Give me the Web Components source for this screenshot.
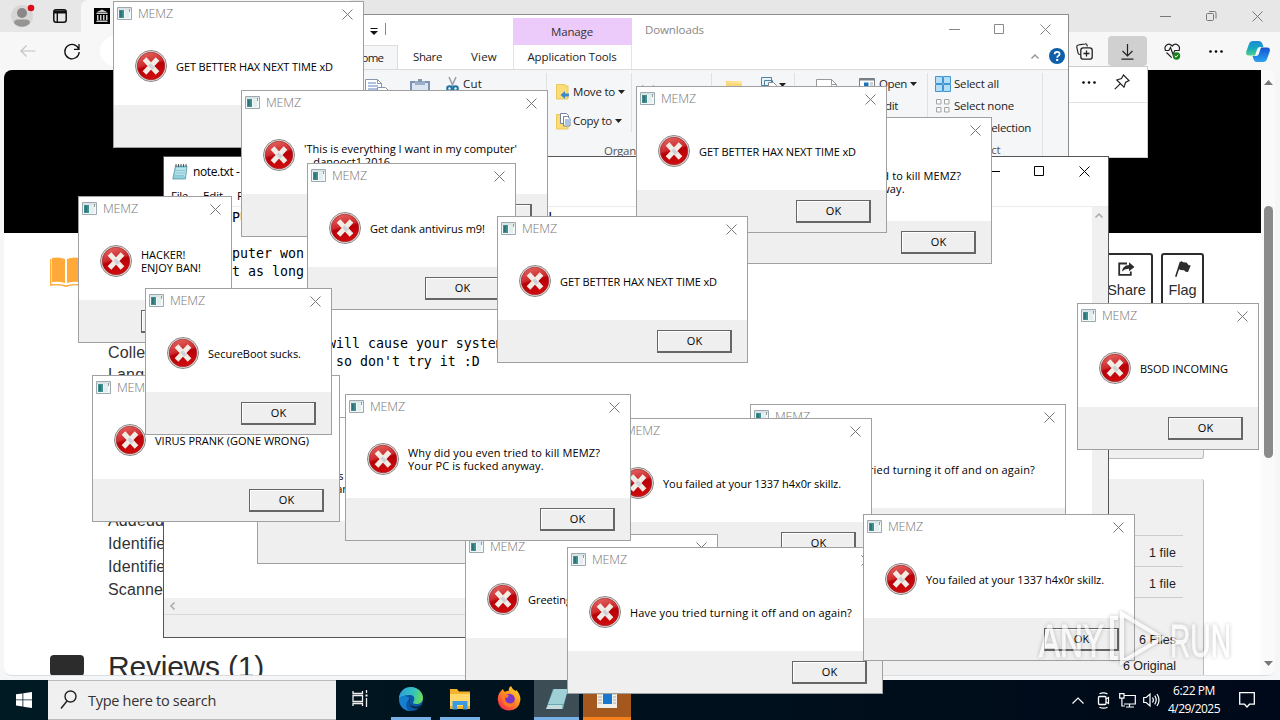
<!DOCTYPE html>
<html lang="en">
<head>
<meta charset="utf-8">
<title>Desktop</title>
<style>
  html, body {
    margin: 0;
    width: 1280px;
    height: 720px;
    overflow: hidden;
  }

  body {
    font-family: "Open Sans", "Noto Sans", sans-serif;
    font-size: 12px;
    color: #111;
  }
</style>
</head>
<body>
<desk-top></desk-top>

<script>
const define = (name, html, setup) => {
  const template = document.createElement('template');
  template.innerHTML = html;

  customElements.define(name, class extends HTMLElement {
    connectedCallback() {
      if (!this.shadowRoot) {
        this.attachShadow({ mode: 'open' });
        this.shadowRoot.appendChild(template.content.cloneNode(true));
        if (setup) {
          setup(this, this.shadowRoot);
        }
      }
    }
  });
};

// Text that is letter-spaced to fill a given width
define('fit-text', `
  <style>
    :host { display: inline-block; flex: none; white-space: nowrap; }
    span { display: block; width: max-content; white-space: pre; }
  </style>
  <span><slot></slot></span>
`, (host, root) => {
  const span = root.querySelector('span');
  const chars = Math.max(...host.textContent.split('\n').map((line) => line.length));
  const target = Number(host.getAttribute('width'));
  const natural = span.getBoundingClientRect().width;
  span.style.letterSpacing = `${(target - natural) / chars}px`;
  host.style.width = `${target}px`;
});

const icons = {
  close: ['0 0 11 11', '<path d="M.5.5l10 10M10.5.5l-10 10" fill="none" stroke="currentColor"/>'],
  max: ['0 0 11 11', '<path d="M.5.5h9v9h-9z" fill="none" stroke="currentColor"/>'],
  min: ['0 0 11 11', '<path d="M0 5.5h11" fill="none" stroke="currentColor"/>'],
  restore: ['0 0 11 11', '<path d="M.5 3.5q0-1 1-1h5q1 0 1 1v5q0 1-1 1h-5q-1 0-1-1zM3 .5h5.500q1.500 0 1.500 1.500v5.500" fill="none" stroke="currentColor"/>'],
  caret: ['0 0 7 4', '<path d="M0 0h7l-3.500 4z" fill="currentColor"/>'],
  up: ['0 0 8 5', '<path d="M.5 4.500L4 1l3.500 3.500" fill="none" stroke="currentColor" stroke-width="1.500"/>'],
  left: ['0 0 5 8', '<path d="M4.500.5L1 4l3.500 3.500" fill="none" stroke="currentColor" stroke-width="1.500"/>'],
  app: ['0 0 15 13', '<path d="M.5.5h14v12H.5z" fill="#f5f8f8" stroke="#9caaaf"/><path d="M1 1h13v2H1z" fill="#dbe3e6"/><path d="M2 3h5v8H2z" fill="#3f8f8c"/><path d="M3 4h2v6H3z" fill="#2f7380"/><path d="M8 3h4v8H8z" fill="#e2efef"/><path d="M12 2h1v3h-1z" fill="#999"/>'],
  error: ['0 0 32 32', '<defs><linearGradient id="r" x1=".1" y1="0" x2=".4" y2="1"><stop offset="0" stop-color="#e56a64"/><stop offset=".48" stop-color="#cf2a2e"/><stop offset=".56" stop-color="#b80008"/><stop offset="1" stop-color="#cf0c0e"/></linearGradient></defs><circle cx="16" cy="16" r="15.500" fill="#ebe7e6" stroke="#8d8585"/><circle cx="16" cy="16" r="13.800" fill="url(#r)" stroke="#9c2427" stroke-width=".7"/><path d="M9.500 9l13 14M22.500 9l-13 14" stroke="#f1ece4" stroke-width="5" fill="none"/><path d="M14.500 14.500l4 4.200" stroke="#cfd3d8" stroke-width="3.500"/>'],
  note: ['0 0 16 17', '<path d="M3.500 3h11.500l-1.500 13H.8z" fill="#8fd0dc" stroke="#5796a5" stroke-width=".8"/><path d="M4 5h10l-1 8H3z" fill="#b4e4ec"/><path d="M4 7.500h9M4 10h9M3 12.500h9" stroke="#6fb0c0" stroke-width=".6"/><path d="M4 1v3M6.500 1v3M9 1v3M11.500 1v3M14 1v3" stroke="#555"/>'],
  pages: ['0 0 26 24', '<path d="M.5.5h12l4 4v18H.5z" fill="#fff" stroke="#8796ad"/><path d="M3 4h8M3 7h10M3 10h10M3 13h10" stroke="#5b86c0"/><path d="M12.500 8.500h8l4 4v11h-12z" fill="#fff" stroke="#8796ad"/><path d="M12.500.5v4h4" fill="none" stroke="#8796ad"/>'],
  clip: ['0 0 20 24', '<path d="M1 3h18v20H1z" fill="#dce6f2" stroke="#7b93b5" stroke-width="2"/><path d="M5 2h10v4H5z" fill="#9dafc6"/><path d="M8 0h4v3H8z" fill="#8497ae"/>'],
  cut: ['0 0 13 17', '<path d="M3 1l5 11M10 1L5 12" stroke="#9aa3ad" stroke-width="1.600" fill="none"/><circle cx="3.500" cy="12.500" r="2.300" fill="none" stroke="#1673a5" stroke-width="2"/><circle cx="9.500" cy="12.500" r="2.300" fill="none" stroke="#1673a5" stroke-width="2"/>'],
  move: ['0 0 14 16', '<path d="M.5.5H9V2h3v13H.5z" fill="#fbdc78" stroke="#ecc85b"/><path d="M13 9.500H9V7l-4.500 4L9 15v-2.500h4z" fill="#3c8ac8"/>'],
  copy: ['0 0 15 17', '<path d="M.5 1.500H10V3h2v13H.5z" fill="#fbdc78" stroke="#ecc85b"/><path d="M4.500.5h6l2 2v8h-8z" fill="#fff" stroke="#73819c"/><path d="M7.500 3.500h4l2.500 2v7.500H7.500z" fill="#fff" stroke="#73819c"/><path d="M9 7h4M9 9h4M9 11h4" stroke="#518bc7"/>'],
  folder: ['0 0 16 14', '<path d="M0 0h16v14H0z" fill="#f8d775"/><path d="M0 2l6-2h10v3z" fill="#ffe49a"/>'],
  newItem: ['0 0 17 16', '<path d="M.5.5h10v8H.5zM3.500 3.500h8v7h-8z" fill="#e8f2f8" stroke="#4f83a3"/><path d="M7.500 5.500h5l3 3v7h-8z" fill="#fff" stroke="#888"/>'],
  props: ['0 0 21 20', '<path d="M.5.5h15l5 5v14H.5z" fill="#fff" stroke="#999"/><path d="M15.500.5v5h5" fill="none" stroke="#999"/><path d="M5 12l3 4 8-9" stroke="#d34" stroke-width="2" fill="none"/>'],
  open: ['0 0 16 13', '<path d="M.5.5h15v12H.5z" fill="#fff" stroke="#777f88"/><path d="M1 1h14v1.500H1z" fill="#777f88"/><path d="M5 4.500h4.500v6H5z" fill="#1b72be"/><path d="M11 5h3M11 7h3M11 9h3" stroke="#9aa"/>'],
  selAll: ['0 0 16 16', '<path d="M.5.5h7v7h-7zM8.500.5h7v7h-7zM.5 8.500h7v7h-7zM8.500 8.500h7v7h-7z" fill="#b5ddf8" stroke="#3e96d8"/>'],
  selNone: ['0 0 14 14', '<path d="M.5.5h4.500v4.500H.5zM8.500.5h4.500v4.500H8.500zM.5 8.500h4.500v4.500H.5zM8.500 8.500h4.500v4.500H8.500z" fill="#fafafa" stroke="#a5a5a5"/>'],
  help: ['0 0 16 16', '<circle cx="8" cy="8" r="8" fill="#0f5ea8"/><path d="M5.600 6.200q0-2.400 2.500-2.400t2.500 2.100q0 1.200-1.300 2-1.100.7-1.100 1.800" fill="none" stroke="#fff" stroke-width="1.700"/><path d="M7.200 11h2v2h-2z" fill="#fff"/>'],
  person: ['0 0 24 24', '<circle cx="11" cy="12" r="11" fill="#d8d6d4"/><circle cx="11" cy="9" r="5" fill="#8a8886"/><path d="M3 19q0-3.500 4-3.500h8q4 0 4 3.500-3 3.800-8 3.800T3 19z" fill="#979593"/><circle cx="20" cy="4" r="3.300" fill="#d90c1c"/>'],
  tabs: ['0 0 14 14', '<rect x=".8" y=".8" width="12.400" height="12.400" rx="2.200" fill="none" stroke="#111" stroke-width="1.500"/><path d="M1 1.500h12v3H5V13H3.600V4.500H1z" fill="#111"/>'],
  museum: ['0 0 16 16', '<path d="M0 0h16v16H0z"/><path d="M8 1.500l6 3H2zM2.500 5h11v1h-11zM3 7h1.500v5H3zm3 0h1.500v5H6zm3 0h1.500v5H9zm3 0h1.500v5H12zM2.500 12.500h11v1.500h-11z" fill="#ccc"/>'],
  back: ['0 0 16 12', '<path d="M15.500 6H1M6.500.5L1 6l5.500 5.500" fill="none" stroke="#c2c2c2" stroke-width="1.200"/>'],
  reload: ['0 0 16 17', '<path d="M14.800 6.200A7.200 7.200 0 1 0 15.200 9M15 1v5.300h-5" fill="none" stroke="#111" stroke-width="1.300"/>'],
  collections: ['0 0 17 17', '<path d="M4.500 11.500H3.800q-1.500 0-1.800-1.500L.8 4Q.5 2.300 2.200 2l7-1.200q1.500-.3 1.800 1.200l.3 1.500" fill="none" stroke="#222" stroke-width="1.200"/><rect x="4.800" y="4.800" width="11.400" height="11.400" rx="2.500" fill="#f7f7f7" stroke="#222" stroke-width="1.300"/><path d="M10.500 7.500v6M7.500 10.500h6" stroke="#222" stroke-width="1.300"/>'],
  down: ['0 0 13 17', '<path d="M6.500 1v11.500M1.500 8l5 5 5-5M.5 16.200h12" fill="none" stroke="#222" stroke-width="1.200"/>'],
  heart: ['0 0 17 17', '<path d="M1.500 7.500C-.5 3 4.500-1 8.200 3c3.700-4 8.800 0 6.800 4.500M2.500 9.500l5.200 5.200M.8 7.500h4L6.500 4.500l2.500 7L10.800 7.500h5" fill="none" stroke="#222" stroke-width="1.200"/><circle cx="12.500" cy="13" r="3.700" fill="#16821b"/><path d="M10.800 13l1.200 1.200 2.200-2.400" fill="none" stroke="#fff"/>'],
  dots: ['0 0 14 3', '<circle cx="1.500" cy="1.500" r="1.300"/><circle cx="7" cy="1.500" r="1.300"/><circle cx="12.500" cy="1.500" r="1.300"/>'],
  pin: ['0 0 16 16', '<path d="M9.500 1l5.500 5.500-3.500 2-1.500 4.700L2.800 6l4.700-1.500zM6.200 9.800L.8 15.200" fill="none" stroke="#222" stroke-width="1.200"/>'],
  copilot: ['0 0 24 23', '<defs><linearGradient id="a" x1="0" y1="0" x2="0" y2="1"><stop offset="0" stop-color="#2188d9"/><stop offset=".5" stop-color="#16a8c0"/><stop offset="1" stop-color="#4fd08a"/></linearGradient><linearGradient id="b" x1="0" y1="0" x2="0" y2="1"><stop offset="0" stop-color="#1553d0"/><stop offset="1" stop-color="#2aa3f2"/></linearGradient></defs><path d="M7 1h6q2.500 0 3.300 2.500L17.500 7H14q-2 0-2.800 2L9 15.500H3Q-.8 15.500.3 11.500L3 4q1-3 4-3z" fill="url(#a)"/><path d="M17 22h-6q-2.500 0-3.300-2.500L6.500 16H10q2 0 2.800-2L15 7.500h6q3.800 0 2.700 4L21 19q-1 3-4 3z" fill="url(#b)"/>'],
  book: ['0 0 32 30', '<path d="M2 1v24q7-1 13 1V2Q9-.5 2 1zM17 2v24q6-2 13-1V1q-7-1.500-13 1z" fill="#fea938"/><path d="M.7 2v26q8-1 13 .5 2.300 1 4.600 0Q24 27 31.300 28V2" fill="none" stroke="#fea938" stroke-width="1.400"/>'],
  share: ['0 0 17 14', '<path d="M9 1.500H1.200v11.300h11.600V9.500" fill="none" stroke="#2c2c2c" stroke-width="1.800"/><path d="M4 9.500q.5-6 7-6.500V.3L16.500 5 11 9.300V6.700Q6.500 6.500 4 9.500z" fill="#2c2c2c"/>'],
  flag: ['0 0 16 16', '<path d="M5.500 1L.8 15.700" stroke="#2c2c2c" stroke-width="1.600"/><path d="M6 0q3 2 5.500 1.500 1 2.500 4.200 3L13 11q-3 .5-4-2-2 .8-5.400-1z" fill="#2c2c2c"/>'],
  start: ['0 0 16 16', '<path d="M0 2.300l6.500-.9v6.100H0zM7.300 1.300L16 0v7.500H7.300zM0 8.300h6.500v6.200L0 13.600zM7.300 8.300H16V16l-8.700-1.300z" fill="#fff"/>'],
  search: ['0 0 17 20', '<circle cx="10.500" cy="6.500" r="5.500" fill="none" stroke="#222" stroke-width="1.400"/><path d="M7 11L1 18.500" stroke="#222" stroke-width="1.500"/>'],
  taskview: ['0 0 17 17', '<path d="M1 1v2.500h9.500V1M1 16v-2.500h9.500V16M1 5.500h9.500v6H1zM14.500 0v3M14.500 8v9" fill="none" stroke="#eee" stroke-width="1.300"/><path d="M13.500 4.500h2v2h-2z" fill="#fff"/>'],
  edge: ['0 0 26 26', '<defs><linearGradient id="e" x1="0" y1=".3" x2="1" y2=".5"><stop offset="0" stop-color="#2a9fdc"/><stop offset=".6" stop-color="#36c5b8"/><stop offset="1" stop-color="#6bdc58"/></linearGradient></defs><circle cx="13" cy="13" r="12" fill="#0d57a5"/><path d="M1 13C1 5.500 6.500 1 13 1s12 5 12 11c0 4-3.200 6-6.800 6-3 0-4-1-2.700-2.500 2-2.800.5-6.500-3.200-6.500C7 9 3 10 1 13z" fill="url(#e)"/><path d="M1 13c0 7 5 12 11 12C7 23 7 15.500 11.500 13c-.5-3-7.500-5-10.500 0z" fill="#1480ce"/><path d="M12.500 11.500q-3.500 3.500 0 7.500 5 3.500 11 0-.8 1.800-2.500 3-4.500 1.500-8-1.500-3.500-4-.5-9z" fill="#04263f"/>'],
  files: ['0 0 22 22', '<path d="M1 1h7l2 2.500h11V21H1z" fill="#f3b32d"/><path d="M1 6h20v12H1z" fill="#ffd869"/><path d="M3.500 13h15v8.500H14V17H8v4.500H3.500z" fill="#3c9be0"/>'],
  firefox: ['0 0 24 25', '<defs><linearGradient id="f" x1="1" y1="0" x2=".2" y2="1"><stop offset="0" stop-color="#ffe63c"/><stop offset=".45" stop-color="#ff9a1f"/><stop offset="1" stop-color="#f5274f"/></linearGradient></defs><path d="M4 5l1.500-2L8 6q2-1.500 4-1.200Q11 2 14 0q1 3 4.500 5l.8-1Q24 9 23.300 14.500 22 24 12 24.500 1.500 24 .7 13.500.7 8.500 4 5z" fill="url(#f)"/><circle cx="12.500" cy="13" r="5.300" fill="#7b35c9"/><path d="M5 10q3-2 7-.5-1 2.500-4 2.500 0 5 5 5.500 4 0 5.500-4 0 7-6.500 7.500-6.500-.5-7-11z" fill="#ff7a20"/>'],
  notepad: ['0 0 22 28', '<path d="M7 4h15l-5 20H0z" fill="#68a8b2"/><path d="M8 4h14l-4.500 15H2z" fill="#9fd0d5"/><path d="M0 24l2-4h14.500L16 24z" fill="#c5dbdc"/>'],
  memzTask: ['0 0 22 22', '<path d="M1 1h20v19H1z" fill="#f2efe8"/><path d="M7 3h9v13H7z" fill="#1878d0"/><path d="M2 6h4M2 9h4M2 12h4M2 15h4M17 6h3M17 9h3M17 12h3M17 15h3" stroke="#aaa"/>'],
  trayUp: ['0 0 12 7', '<path d="M.5 6.500L6 1l5.500 5.500" fill="none" stroke="#fff" stroke-width="1.200"/>'],
  cam: ['0 0 13 17', '<rect x="1.500" y="4.500" width="7.500" height="8" rx="1" fill="none" stroke="#fff" stroke-width="1.300"/><path d="M9 7l2.500-1.500v6L9 10M2.500 1.800Q6.500-.3 10.500 2M2.500 15.200q4 2 8 0" fill="none" stroke="#fff" stroke-width="1.200"/>'],
  net: ['0 0 17 15', '<path d="M5 2.500h11.300v8.500H5M10.500 11v3M7 14h8M.7.7H5v4.500H.7zM2.900 5.500V13h3" fill="none" stroke="#fff" stroke-width="1.200"/>'],
  sound: ['0 0 17 14', '<path d="M.7 4.500h2.500L7 1v12L3.200 9.500H.7zM9.500 4.500q1.800 2.500 0 5M11.700 2.700q3 4.300 0 8.600M14 1q4 6 0 12" fill="none" stroke="#fff" stroke-width="1.200"/>'],
  notif: ['0 0 16 16', '<path d="M.7.7h14.600v11.500H10.500L8 15l-2.500-2.800H.7z" fill="none" stroke="#fff" stroke-width="1.300"/>']
};

define('ui-icon', `
  <style>
    :host { display: block; flex: none; }
    svg { display: block; width: 100%; height: 100%; overflow: visible; }
  </style>
`, (host, root) => {
  const [viewBox, body] = icons[host.getAttribute('name')];
  const [, , w, h] = viewBox.split(' ');
  root.innerHTML += `<svg viewBox="${viewBox}">${body}</svg>`;
  host.style.width = `${w}px`;
  host.style.height = `${h}px`;
});

define('memz-dialog', `
  <style>
    :host {
      position: absolute;
      box-sizing: border-box;
      height: 147px;
      display: flex;
      flex-direction: column;
      background: #fff;
      border: 1px solid #a0a0a0;
      color: #000;
    }
    header {
      height: 25px;
      display: flex;
      align-items: center;
      justify-content: space-between;
      padding: 0 10px 0 3px;
      color: #777;
    }
    .name { display: flex; align-items: center; height: 23px; margin-bottom: 2px; }
    .name fit-text {
      margin-left: 6px;
      font-size: 12.500px;
      font-weight: 300;
      line-height: 16px;
    }
    main {
      height: 78px;
      display: flex;
      padding-left: 21px;
    }
    main ui-icon { margin-top: 23px; }
    .text {
      height: 78px;
      display: flex;
      align-items: center;
      margin-left: 9px;
      font-size: 11px;
      line-height: 13px;
    }
    footer {
      flex: 1;
      display: flex;
      justify-content: flex-end;
      padding: 10px 15px 0 0;
      background: #efefef;
    }
    button {
      box-sizing: border-box;
      width: 75px;
      height: 23px;
      padding: 0 0 1px 1px;
      font: 11px "Open Sans", sans-serif;
      color: #000;
      background: #efefef;
      border: solid #666;
      border-width: 1px 2px 2px 1px;
      border-radius: 0;
      box-shadow: inset 1px 1px #fff;
    }
  </style>
  <header><div class="name"><ui-icon name="app"></ui-icon><fit-text width="35">MEMZ</fit-text></div><ui-icon name="close"></ui-icon></header>
  <main><ui-icon name="error"></ui-icon><div class="text"></div></main>
  <footer><button>OK</button></footer>
`, (host, root) => {
  const [x, y, w] = host.getAttribute('box').split(' ').map(Number);
  host.style.cssText = `left: ${x}px; top: ${y}px; width: ${w}px`;

  const text = document.createElement('fit-text');
  text.textContent = host.getAttribute('text').replace('|', '\n');
  // the window is as wide as its message plus fixed margins
  text.setAttribute('width', w - 94);
  root.querySelector('.text').appendChild(text);
});

define('edge-window', `
  <style>
    :host {
      display: flex;
      flex-direction: column;
      width: 1280px;
      height: 680px;
      background: #f4f6f8;
      font-family: "Liberation Sans", Arial, sans-serif;
      color: #2c2c2c;
    }
    .strip { display: flex; height: 32px; background: #e7e7e7; color: #777; align-items: center; }
    .tab { width: 270px; height: 32px; margin-left: 14px; background: #f7f7f7; border-radius: 7px 0 0 0; display: flex; align-items: center; }
    .caps { margin-left: auto; display: flex; gap: 35px; padding-right: 17px; }
    .bar { display: flex; align-items: center; height: 38px; background: #f7f7f7; }
    .url { width: 900px; height: 30px; border-radius: 15px; background: #fff; margin-left: 20px; }
    .tools { margin-left: auto; display: flex; align-items: center; padding-right: 10px; }
    .dl { width: 39px; height: 30px; border-radius: 4px; background: #d0d0d0; display: flex; align-items: center; justify-content: center; margin: 0 17px 0 15px; }
    .view { display: flex; margin: 0 5px 0 4px; height: 606px; background: #fff; border-radius: 8px; overflow: hidden; border-bottom: 1px solid #ddd; box-sizing: border-box; }
    .page { width: 1257px; }
    .scroll { flex: 1; background: #fafafa; display: flex; flex-direction: column; align-items: center; color: #858585; }
    .thumb { width: 9px; height: 252px; border-radius: 5px; background: #8a8a8a; margin: 119px 0 203px; }
    .hero { height: 163px; background: #000; }
    .cols { display: flex; height: 443px; }
    .side { width: 34px; margin: 24px 24px 0 46px; display: flex; flex-direction: column; }
    .black { height: 40px; margin-top: 368px; background: #2c2c2c; border-radius: 4px; }
    .meta { width: 745px; padding-top: 109px; font-size: 16px; line-height: 22px; letter-spacing: .15px; color: #333; }
    .meta div { height: 22px; }
    .meta .gap { height: 123px; }
    .meta .low { height: 92px; }
    .meta .low div { height: 23px; line-height: 23px; }
    h2 { margin: 48px 0 0; font-weight: normal; font-size: 30px; line-height: 36px; letter-spacing: 0; color: #2c2c2c; }
    .right { flex: 1; display: flex; flex-direction: column; padding: 20px 57px 0 0; }
    .acts { display: flex; justify-content: flex-end; gap: 8px; }
    .act { box-sizing: border-box; width: 43px; height: 60px; border: 2px solid #2c2c2c; border-radius: 3px; display: flex; flex-direction: column; align-items: center; padding-top: 6px; gap: 3px; font-size: 14.500px; line-height: 20px; }
    .act.wide { width: 53px; padding-top: 7px; gap: 4px; }
    .card { flex: none; background: #f0f0f0; border: solid #bbb; border-width: 0 1px 1px 0; border-radius: 3px; box-sizing: border-box; height: 126px; margin-top: 20px; }
    .files { height: 260px; padding: 56px 20px 0; font-size: 12.500px; text-align: right; color: #222; }
    .files div { height: 30px; border-top: 1px solid #ccc; line-height: 35px; padding-right: 7px; }
    .files .n { border: 0; height: 26px; line-height: 26px; }
    .files .first { height: 55px; line-height: 84px; }
  </style>
  <div class="strip">
    <ui-icon name="person" style="margin-left: 11px"></ui-icon>
    <ui-icon name="tabs" style="margin-left: 18px"></ui-icon>
    <div class="tab"><ui-icon name="museum" style="margin-left: 13px"></ui-icon></div>
    <div class="caps"><ui-icon name="min"></ui-icon><ui-icon name="restore"></ui-icon><ui-icon name="close"></ui-icon></div>
  </div>
  <div class="bar">
    <ui-icon name="back" style="margin-left: 20px"></ui-icon>
    <ui-icon name="reload" style="margin-left: 28px"></ui-icon>
    <div class="url"></div>
    <div class="tools">
      <ui-icon name="collections"></ui-icon>
      <div class="dl"><ui-icon name="down"></ui-icon></div>
      <ui-icon name="heart"></ui-icon>
      <ui-icon name="dots" style="margin: 0 23px 0 28px"></ui-icon>
      <ui-icon name="copilot"></ui-icon>
    </div>
  </div>
  <div class="view">
    <div class="page">
      <div class="hero"></div>
      <div class="cols">
        <div class="side"><ui-icon name="book"></ui-icon><div class="black"></div></div>
        <div class="meta">
          <div>Collection</div>
          <div>Language</div>
          <div class="gap"></div>
          <div class="low"><div>Addeddate</div><div>Identifier</div><div>Identifier-ark</div><div>Scanner</div></div>
          <h2><fit-text width="156">Reviews (1)</fit-text></h2>
        </div>
        <div class="right">
          <div class="acts">
            <div class="act wide"><ui-icon name="share"></ui-icon><span>Share</span></div>
            <div class="act"><ui-icon name="flag"></ui-icon><span>Flag</span></div>
          </div>
          <div class="card"></div>
          <div class="card files">
            <div><fit-text width="27">1 file</fit-text></div><div><fit-text width="27">1 file</fit-text></div><div class="first"><fit-text width="37">6 Files</fit-text></div><div class="n"><fit-text width="53">6 Original</fit-text></div>
          </div>
        </div>
      </div>
    </div>
    <div class="scroll">
      <svg width="9" height="17" style="display: block"><path d="M0 15l4.500-5 4.500 5z" fill="#777"/></svg>
      <div class="thumb"></div>
      <svg width="9" height="6" style="display: block"><path d="M0 0h9l-4.500 5z" fill="#777"/></svg>
    </div>
  </div>
`);

define('downloads-flyout', `
  <style>
    :host { position: absolute; left: 1060px; top: 66px; width: 87px; height: 90px; background: #fff; border: solid #ccc; border-width: 1px 1px 1px 0; box-sizing: content-box; }
    div { display: flex; align-items: center; justify-content: flex-end; height: 35px; gap: 18px; padding: 0 17px 0 0; border-bottom: 1px solid #e3e3e3; }
    ui-icon { margin-top: -5px; }
  </style>
  <div><ui-icon name="dots"></ui-icon><ui-icon name="pin"></ui-icon></div>
`);

define('explorer-window', `
  <style>
    :host {
      position: absolute;
      left: 245px;
      top: 14px;
      box-sizing: border-box;
      width: 824px;
      height: 300px;
      background: #fff;
      border: 1px solid #8c8c8c;
      display: flex;
      flex-direction: column;
      color: #222;
      font-size: 11.500px;
      line-height: 16px;
    }
    .row { display: flex; flex: none; }
    .title { height: 30px; color: #888; }
    .title > * { margin-top: 7px; }
    .title .manage { width: 118px; padding-right: 1px; margin: 3px 0 0 115px; background: #eccbfb; color: #333; text-align: center; line-height: 28px; }
    .tabs { height: 24px; line-height: 24px; }
    .home { box-sizing: border-box; width: 152px; padding-left: 108px; background: #f5f6f7; border: solid #ddd; border-width: 1px 1px 0 0; line-height: 23px; }
    .app { width: 116px; padding-right: 1px; margin-left: 17px; border: solid #e4e4e4; border-width: 0 1px; text-align: center; }
    .ribbon { height: 88px; background: #f5f6f7; border-top: 1px solid #dadbdc; box-sizing: border-box; }
    .group { box-sizing: border-box; border-right: 1px solid #e0e1e2; height: 84px; margin-top: 3px; display: flex; flex-direction: column; }
    .group .row { height: 70px; }
    .label { text-align: center; line-height: 15px; color: #555; }
    .item { display: flex; align-items: center; height: 22px; }
    .item fit-text { margin-left: 3px; }
    .item ui-icon[name=caret] { margin-left: 3px; }
    .col { display: flex; flex-direction: column; }
  </style>
  <div class="row title">
    <svg width="30" height="16" style="margin-left: 122px; margin-top: 6px"><path d="M2.500 7.500h7" stroke="#111"/><path d="M2 10h8l-4 4z" fill="#111"/><path d="M17.500 2v12" stroke="#888"/></svg>
    <div class="manage"><fit-text width="42">Manage</fit-text></div>
    <fit-text width="59" style="margin-left: 13px">Downloads</fit-text>
    <ui-icon name="min" style="margin: 9px 34px 0 auto"></ui-icon>
    <ui-icon name="max" style="margin: 9px 35px 0 0"></ui-icon>
    <ui-icon name="close" style="margin: 9px 17px 0 0"></ui-icon>
  </div>
  <div class="row tabs">
    <div class="home"><fit-text width="29">Home</fit-text></div>
    <fit-text width="29" style="margin-left: 15px">Share</fit-text>
    <fit-text width="26" style="margin-left: 29px">View</fit-text>
    <div class="app" style="margin-left: 16px"><fit-text width="89">Application Tools</fit-text></div>
    <ui-icon name="up" style="margin: 9px 10px 0 auto; color: #999"></ui-icon>
    <ui-icon name="help" style="margin: 3px 3px 0 0"></ui-icon>
  </div>
  <div class="row ribbon">
    <div class="group" style="width: 301px">
      <div class="row" style="padding-left: 119px">
        <ui-icon name="pages" style="margin-top: 6px"></ui-icon>
        <ui-icon name="clip" style="margin: 6px 0 0 19px"></ui-icon>
        <div class="item" style="margin-left: 16px"><ui-icon name="cut"></ui-icon><fit-text width="19" style="margin-left: 4px">Cut</fit-text></div>
      </div>
      <div class="label">Clipboard</div>
    </div>
    <div class="group" style="width: 165px">
      <div class="row">
        <div class="col" style="width: 85px; box-sizing: border-box; padding: 8px 0 0 9px; gap: 7px; border-right: 1px solid #e0e1e2; height: 59px">
          <div class="item"><ui-icon name="move"></ui-icon><fit-text width="42">Move to</fit-text><ui-icon name="caret"></ui-icon></div>
          <div class="item"><ui-icon name="copy"></ui-icon><fit-text width="39" style="margin-left: 2px">Copy to</fit-text><ui-icon name="caret"></ui-icon></div>
        </div>
        <svg width="16" height="16" style="margin: 12px 0 0 9px"><path d="M1 1l12 12M13 1L1 13" stroke="#555" stroke-width="2"/></svg>
      </div>
      <div class="label"><fit-text width="46" style="margin-right: 4px">Organize</fit-text></div>
    </div>
    <div class="group" style="width: 83px">
      <div class="row" style="padding: 4px 0 0 14px">
        <ui-icon name="folder" style="margin-top: 4px"></ui-icon>
        <ui-icon name="newItem" style="margin-left: 19px"></ui-icon>
        <ui-icon name="caret" style="margin: 6px 0 0 1px; color: #222"></ui-icon>
      </div>
      <div class="label">New</div>
    </div>
    <div class="group" style="width: 133px">
      <div class="row" style="padding-left: 21px">
        <ui-icon name="props" style="margin-top: 6px"></ui-icon>
        <div class="col" style="margin-left: 22px">
          <div class="item"><ui-icon name="open"></ui-icon><fit-text width="28" style="margin-left: 4px">Open</fit-text><ui-icon name="caret"></ui-icon></div>
          <div class="item"><fit-text width="19" style="margin-left: 20px">Edit</fit-text></div>
        </div>
      </div>
      <div class="label">Open</div>
    </div>
    <div class="group" style="width: 115px">
      <div class="col" style="height: 70px; padding-left: 7px">
        <div class="item"><ui-icon name="selAll"></ui-icon><fit-text width="45">Select all</fit-text></div>
        <div class="item"><ui-icon name="selNone" style="margin-left: 1px"></ui-icon><fit-text width="60" style="margin-left: 4px">Select none</fit-text></div>
        <div class="item"><ui-icon name="selNone" style="margin-left: 1px"></ui-icon><fit-text width="77" style="margin-left: 4px">Invert selection</fit-text></div>
      </div>
      <div class="label"><fit-text width="31">Select</fit-text></div>
    </div>
  </div>
`);

define('notepad-window', `
  <style>
    :host {
      position: absolute;
      left: 163px;
      top: 156px;
      box-sizing: border-box;
      width: 946px;
      height: 482px;
      background: #fff;
      border: 1px solid #555;
      display: flex;
      flex-direction: column;
      color: #000;
    }
    header { display: flex; height: 28px; padding: 0 18px 2px 8px; align-items: center; }
    header ui-icon + ui-icon { margin-left: 34px; }
    nav { display: flex; height: 20px; padding-left: 7px; line-height: 18px; font-size: 11.500px; border-bottom: 1px solid #ececec; box-sizing: border-box; }
    .edit { display: flex; height: 391px; }
    pre { flex: 1; margin: 0; padding: 2px 4px; font: 13.290px/18px "DejaVu Sans Mono", monospace; overflow: hidden; }
    .v { width: 16px; background: #f0f0f0; color: #aaa; }
    .h { height: 16px; background: #f0f0f0; border-bottom: 1px solid #d9d9d9; color: #aaa; }
    .status { flex: 1; background: #f0f0f0; }
  </style>
  <header>
    <ui-icon name="note"></ui-icon>
    <fit-text width="95" style="margin: 0 auto 0 5px">note.txt - Notepad</fit-text>
    <ui-icon name="min"></ui-icon><ui-icon name="max"></ui-icon><ui-icon name="close"></ui-icon>
  </header>
  <nav>
    <fit-text width="17">File</fit-text>
    <fit-text width="20" style="margin-left: 15px">Edit</fit-text>
    <fit-text width="38" style="margin-left: 14px">Format</fit-text>
  </nav>
  <div class="edit">
<pre>YOUR COMPUTER HAS BEEN FUCKED BY THE MEMZ TROJAN.

Your computer won't boot up again,
so use it as long as you can!

:D

Trying to kill MEMZ will cause your system to be
destroyed instantly, so don't try it :D</pre>
    <div class="v"><ui-icon name="up" style="margin: 6px 0 0 3px"></ui-icon></div>
  </div>
  <div class="h"><ui-icon name="left" style="padding: 4px 0 0 6px"></ui-icon></div>
  <div class="status"></div>
`);

define('task-bar', `
  <style>
    :host { position: absolute; left: 0; top: 680px; width: 1280px; height: 40px; display: flex; background: linear-gradient(90deg, #001a24, #00111d 50%, #000919); color: #fff; }
    .start, .app { display: flex; align-items: center; justify-content: center; }
    .start { width: 48px; }
    .search { box-sizing: border-box; width: 288px; height: 40px; display: flex; align-items: center; padding-left: 12px; background: #f0f0f0; border: solid #bbb; border-width: 1px 0; color: #333; font-size: 14.500px; }
    .app { box-sizing: border-box; width: 40px; height: 40px; margin-left: 9px; border-bottom: 3px solid transparent; }
    .open { border-color: #76b0e4; }
    .tray { margin-left: auto; display: flex; align-items: center; padding-right: 25px; font-size: 12px; line-height: 18px; }
    .clock { display: flex; flex-direction: column; align-items: center; width: 54px; margin: 0 18px 0 7px; }
  </style>
  <div class="start"><ui-icon name="start"></ui-icon></div>
  <div class="search"><ui-icon name="search"></ui-icon><fit-text width="128" style="margin-left: 11px">Type here to search</fit-text></div>
  <div class="app" style="margin-left: 4px"><ui-icon name="taskview"></ui-icon></div>
  <div class="app open" style="margin-left: 11px"><ui-icon name="edge"></ui-icon></div>
  <div class="app open"><ui-icon name="files"></ui-icon></div>
  <div class="app"><ui-icon name="firefox"></ui-icon></div>
  <div class="app open" style="width: 45px; margin-left: 5px; background: #3c4d56"><ui-icon name="notepad"></ui-icon></div>
  <div class="app" style="width: 48px; margin-left: 4px; background: #a4581d; border-color: #f5801e"><ui-icon name="memzTask"></ui-icon></div>
  <div class="tray">
    <ui-icon name="trayUp" style="margin-right: 13px"></ui-icon>
    <ui-icon name="cam" style="margin-right: 9px"></ui-icon>
    <ui-icon name="net" style="margin-right: 7px"></ui-icon>
    <ui-icon name="sound"></ui-icon>
    <div class="clock"><fit-text width="42">6:22 PM</fit-text><fit-text width="52">4/29/2025</fit-text></div>
    <ui-icon name="notif"></ui-icon>
  </div>
`);

define('water-mark', `
  <style>
    :host { position: absolute; left: 1030px; top: 606px; width: 210px; height: 64px; opacity: .6; filter: drop-shadow(0 0 2px rgba(0, 0, 0, .4)); }
    svg { display: block; }
    text { font: 46px "Liberation Sans", Arial, sans-serif; fill: #fff; stroke: #fff; }
  </style>
  <svg width="210" height="64">
    <text x="9" y="51" textLength="65" lengthAdjust="spacingAndGlyphs">ANY</text>
    <text x="140" y="51" textLength="61" lengthAdjust="spacingAndGlyphs">RUN</text>
    <path d="M92 8l40 24-40 24zM88 12h-6v40h6" fill="none" stroke="#fff" stroke-width="4"/>
  </svg>
`);

define('desk-top', `
  <style>
    :host { display: block; position: relative; width: 1280px; height: 720px; overflow: hidden; }
  </style>
  <edge-window></edge-window>
  <downloads-flyout></downloads-flyout>
  <explorer-window></explorer-window>
  <notepad-window></notepad-window>
  <memz-dialog box="706 117 286" text="Why did you even tried to kill MEMZ?|Your PC is fucked anyway."></memz-dialog>
  <memz-dialog box="750 404 316" text="Have you tried turning it off and on again?"></memz-dialog>
  <memz-dialog box="113 1 251" text="GET BETTER HAX NEXT TIME xD"></memz-dialog>
  <memz-dialog box="241 90 307" text="'This is everything I want in my computer'|&nbsp;- danooct1 2016"></memz-dialog>
  <memz-dialog box="257 417 307" text="'This is everything I want in my computer'|&nbsp;- danooct1 2016"></memz-dialog>
  <memz-dialog box="307 163 209" text="Get dank antivirus m9!"></memz-dialog>
  <memz-dialog box="636 86 251" text="GET BETTER HAX NEXT TIME xD"></memz-dialog>
  <memz-dialog box="497 216 251" text="GET BETTER HAX NEXT TIME xD"></memz-dialog>
  <memz-dialog box="78 196 154" text="HACKER!|ENJOY BAN!"></memz-dialog>
  <memz-dialog box="92 375 248" text="VIRUS PRANK (GONE WRONG)"></memz-dialog>
  <memz-dialog box="145 288 187" text="SecureBoot sucks."></memz-dialog>
  <memz-dialog box="600 418 272" text="You failed at your 1337 h4x0r skillz."></memz-dialog>
  <memz-dialog box="465 534 253" text="Greetings to all GAiA members!"></memz-dialog>
  <memz-dialog box="345 394 286" text="Why did you even tried to kill MEMZ?|Your PC is fucked anyway."></memz-dialog>
  <task-bar></task-bar>
  <memz-dialog box="567 547 316" text="Have you tried turning it off and on again?"></memz-dialog>
  <memz-dialog box="863 514 272" text="You failed at your 1337 h4x0r skillz."></memz-dialog>
  <memz-dialog box="1077 303 182" text="BSOD INCOMING"></memz-dialog>
  <water-mark></water-mark>
`);
</script>
</body>
</html>
